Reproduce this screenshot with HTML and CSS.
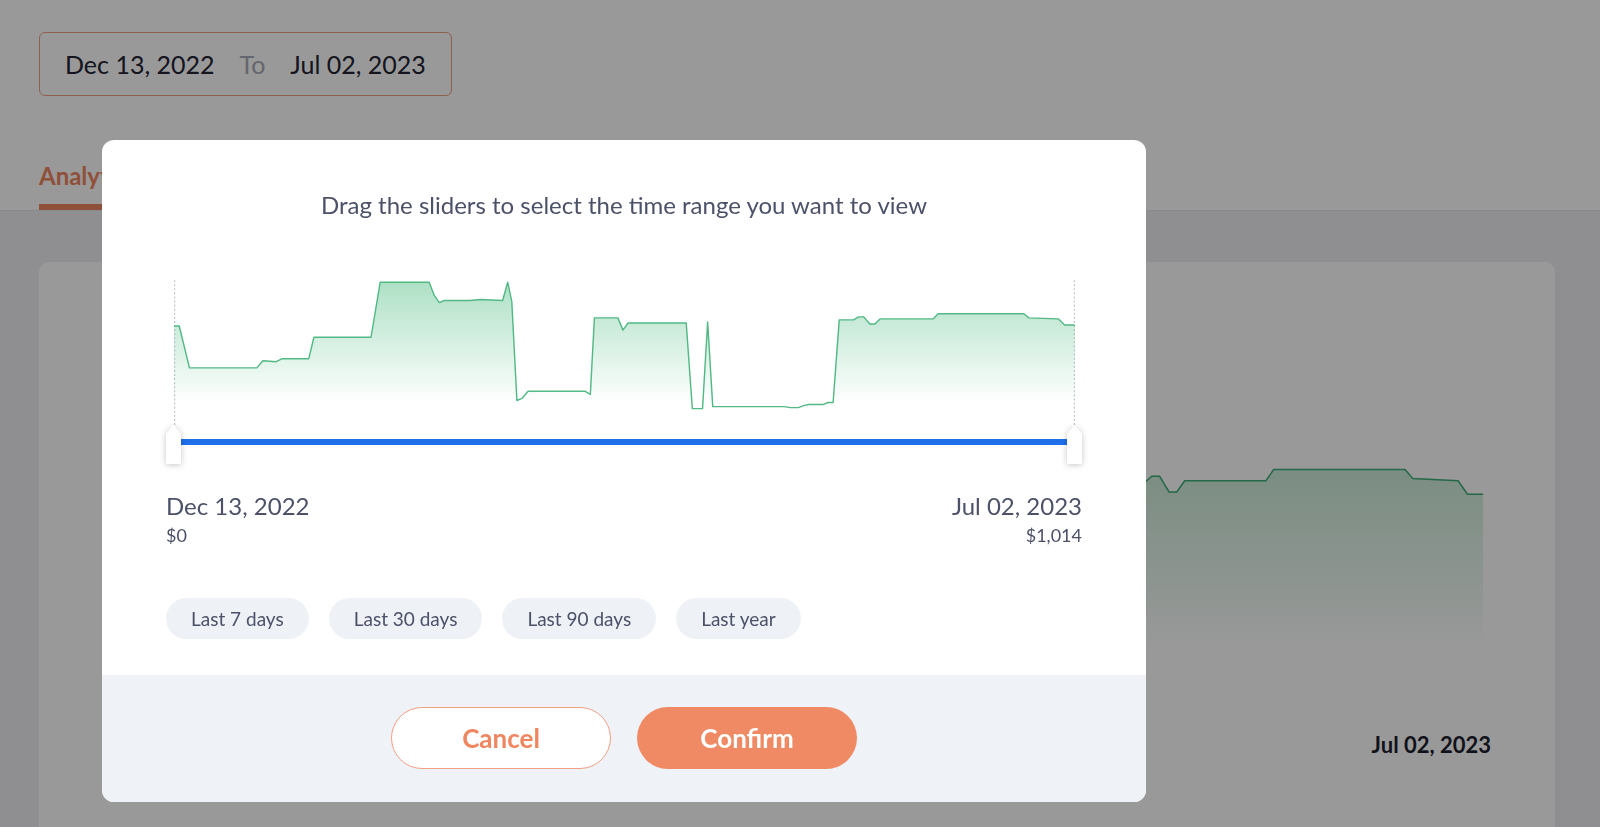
FILE: index.html
```html
<!DOCTYPE html>
<html lang="en">
<head>
    <meta charset="UTF-8">
    <meta name="viewport" content="width=device-width, initial-scale=1.0">
    <title>Analytics - Time range</title>
    <link rel="stylesheet" href="styles.css">
</head>
<body>
    <header class="top">
        <div class="range-box">
            <span>Dec 13, 2022</span>
            <span class="range-to">To</span>
            <span>Jul 02, 2023</span>
        </div>
        <nav class="tabs">
            <span class="tab tab-active">Analytics</span>
        </nav>
    </header>

    <main class="content">
        <div class="card">
            <svg class="big-chart" width="1389" height="265" viewBox="0 0 1362 260">
                <defs>
                    <linearGradient id="bigFill" x1="0" y1="0" x2="0" y2="1">
                        <stop offset="0" stop-color="#48bb78" stop-opacity="0.38"/>
                        <stop offset="0.78" stop-color="#48bb78" stop-opacity="0"/>
                    </linearGradient>
                </defs>
                <g transform="matrix(1.533 0 0 2.2 -11.26 -3.6)">
                    <path fill="url(#bigFill)" d="M8,50 L13,50 L23,91 L89,91 L95,84 L108,85 L114,82 L140,82 L145,61 L201,61 L210,7 L258,7 L263,20 L268,27 L273,25 L298,25 L308,24 L330,25 L335,7 L339,26 L344,123 L349,121 L355,114 L411,114 L416,117 L420,42 L443,42 L448,54 L453,47 L510,47 L516,131 L526,131 L531,46 L536,129 L606,129 L612,130 L620,130 L625,128 L630,127 L644,127 L649,125 L654,125 L660,44 L674,44 L679,41 L684,41 L690,48 L695,48 L700,43 L752,43 L757,38 L841,38 L846,42 L875,43 L881,49 L891,49 L891,150 L8,150 Z"/>
                    <path fill="none" stroke="#3fae77" stroke-width="1.5" vector-effect="non-scaling-stroke" d="M8,50 L13,50 L23,91 L89,91 L95,84 L108,85 L114,82 L140,82 L145,61 L201,61 L210,7 L258,7 L263,20 L268,27 L273,25 L298,25 L308,24 L330,25 L335,7 L339,26 L344,123 L349,121 L355,114 L411,114 L416,117 L420,42 L443,42 L448,54 L453,47 L510,47 L516,131 L526,131 L531,46 L536,129 L606,129 L612,130 L620,130 L625,128 L630,127 L644,127 L649,125 L654,125 L660,44 L674,44 L679,41 L684,41 L690,48 L695,48 L700,43 L752,43 L757,38 L841,38 L846,42 L875,43 L881,49 L891,49"/>
                </g>
            </svg>
            <div class="axis">
                <span>Dec 13, 2022</span>
                <span>Jul 02, 2023</span>
            </div>
        </div>
    </main>

    <div class="overlay">
        <div class="modal">
            <div class="modal-body">
                <p class="modal-title">Drag the sliders to select the time range you want to view</p>

                <svg class="range-chart" width="916" height="150" viewBox="0 0 898 147">
                    <defs>
                        <linearGradient id="rangeFill" x1="0" y1="0" x2="0" y2="1">
                            <stop offset="0" stop-color="#4cbb80" stop-opacity="0.45"/>
                            <stop offset="0.85" stop-color="#4cbb80" stop-opacity="0"/>
                        </linearGradient>
                    </defs>
                    <line x1="8.5" y1="5" x2="8.5" y2="147" stroke="#b8bcc6" stroke-width="1" stroke-dasharray="2 2"/>
                    <line x1="890.5" y1="5" x2="890.5" y2="147" stroke="#b8bcc6" stroke-width="1" stroke-dasharray="2 2"/>
                    <path fill="url(#rangeFill)" d="M8,50 L13,50 L23,91 L89,91 L95,84 L108,85 L114,82 L140,82 L145,61 L201,61 L210,7 L258,7 L263,20 L268,27 L273,25 L298,25 L308,24 L330,25 L335,7 L339,26 L344,123 L349,121 L355,114 L411,114 L416,117 L420,42 L443,42 L448,54 L453,47 L510,47 L516,131 L526,131 L531,46 L536,129 L606,129 L612,130 L620,130 L625,128 L630,127 L644,127 L649,125 L654,125 L660,44 L674,44 L679,41 L684,41 L690,48 L695,48 L700,43 L752,43 L757,38 L841,38 L846,42 L875,43 L881,49 L891,49 L891,147 L8,147 Z"/>
                    <path fill="none" stroke="#52b985" stroke-width="1.4" stroke-linejoin="round" d="M8,50 L13,50 L23,91 L89,91 L95,84 L108,85 L114,82 L140,82 L145,61 L201,61 L210,7 L258,7 L263,20 L268,27 L273,25 L298,25 L308,24 L330,25 L335,7 L339,26 L344,123 L349,121 L355,114 L411,114 L416,117 L420,42 L443,42 L448,54 L453,47 L510,47 L516,131 L526,131 L531,46 L536,129 L606,129 L612,130 L620,130 L625,128 L630,127 L644,127 L649,125 L654,125 L660,44 L674,44 L679,41 L684,41 L690,48 L695,48 L700,43 L752,43 L757,38 L841,38 L846,42 L875,43 L881,49 L891,49"/>
                </svg>

                <div class="slider">
                    <div class="handle"></div>
                    <div class="track"></div>
                    <div class="handle"></div>
                </div>

                <div class="range-labels">
                    <div class="range-end">
                        <div class="range-date">Dec 13, 2022</div>
                        <div class="range-amount">$0</div>
                    </div>
                    <div class="range-end range-end-right">
                        <div class="range-date">Jul 02, 2023</div>
                        <div class="range-amount">$1,014</div>
                    </div>
                </div>

                <div class="presets">
                    <button class="preset">Last 7 days</button>
                    <button class="preset">Last 30 days</button>
                    <button class="preset">Last 90 days</button>
                    <button class="preset">Last year</button>
                </div>
            </div>

            <div class="modal-footer">
                <button class="btn btn-cancel">Cancel</button>
                <button class="btn btn-confirm">Confirm</button>
            </div>
        </div>
    </div>
</body>
</html>
```

FILE: styles.css
```css
body {
    margin: 0;
    font-family: Lato, "Open Sans", sans-serif;
    background-color: #eeeff3;
    color: #222433;
    overflow: hidden;
}
.top {
    background: white;
    padding: 32px 39px 0;
    border-bottom: 1px solid #e4e6ec;
}
.range-box {
    display: inline-flex;
    align-items: center;
    gap: 25px;
    height: 62px;
    padding: 0 25px;
    border: 1px solid #f0a083;
    border-radius: 6px;
    font-size: 25px;
}
.range-to {
    color: #a7abb6;
}
.tabs {
    display: flex;
    gap: 40px;
    margin-top: 66px;
}
.tab {
    font-size: 24px;
    line-height: 28px;
    font-weight: bold;
    padding-bottom: 14px;
    color: #7a7f91;
}
.tab-active {
    color: #ef8660;
    border-bottom: 6px solid #ef8660;
}
.content {
    padding: 51px 45px 0 39px;
}
.card {
    background: white;
    border-radius: 10px 10px 0 0;
    padding: 126px 64px 69px 63px;
}
.big-chart {
    display: block;
}
.axis {
    display: flex;
    justify-content: space-between;
    margin-top: 79px;
    font-size: 22px;
    line-height: 26px;
    font-weight: bold;
    color: #1d1f2e;
}
.overlay {
    position: fixed;
    top: 0;
    left: 0;
    right: 0;
    bottom: 0;
    background: rgba(0, 0, 0, 0.4);
    padding: 140px 0 0 102px;
}
.modal {
    width: 1044px;
    background: white;
    border-radius: 12px;
    overflow: hidden;
}
.modal-body {
    padding: 50px 64px 36px;
}
.modal-title {
    margin: 0;
    text-align: center;
    font-size: 24px;
    line-height: 29px;
    color: #4b5168;
}
.range-chart {
    display: block;
    margin-top: 56px;
}
.slider {
    display: flex;
    height: 39px;
}
.handle {
    width: 15px;
    height: 39px;
    filter: drop-shadow(0 1px 3px rgba(0, 0, 0, 0.22));
}
.handle::before {
    content: '';
    display: block;
    width: 100%;
    height: 100%;
    background: white;
    clip-path: polygon(50% 0, 100% 22%, 100% 100%, 0 100%, 0 22%);
}
.track {
    flex: 1;
    height: 6px;
    margin-top: 14px;
    background: #1f6fe8;
}
.range-labels {
    display: flex;
    justify-content: space-between;
    margin-top: 28px;
    color: #4b5168;
}
.range-end-right {
    text-align: right;
}
.range-date {
    font-size: 24px;
    line-height: 28px;
}
.range-amount {
    font-size: 18px;
    line-height: 22px;
    margin-top: 4px;
}
.presets {
    display: flex;
    gap: 20px;
    margin-top: 52px;
}
.preset {
    height: 41px;
    padding: 0 25px;
    border: none;
    border-radius: 21px;
    background: #eef1f6;
    font-family: inherit;
    font-size: 19px;
    color: #4b5168;
}
.modal-footer {
    display: flex;
    justify-content: center;
    gap: 26px;
    padding: 32px 0 33px;
    background: #eff2f7;
}
.btn {
    width: 220px;
    height: 62px;
    border-radius: 31px;
    font-family: inherit;
    font-size: 26px;
    font-weight: bold;
    cursor: pointer;
}
.btn-cancel {
    background: white;
    border: 1px solid #f0a083;
    color: #ef8660;
}
.btn-confirm {
    background: #ef8a65;
    border: none;
    color: white;
}
```
